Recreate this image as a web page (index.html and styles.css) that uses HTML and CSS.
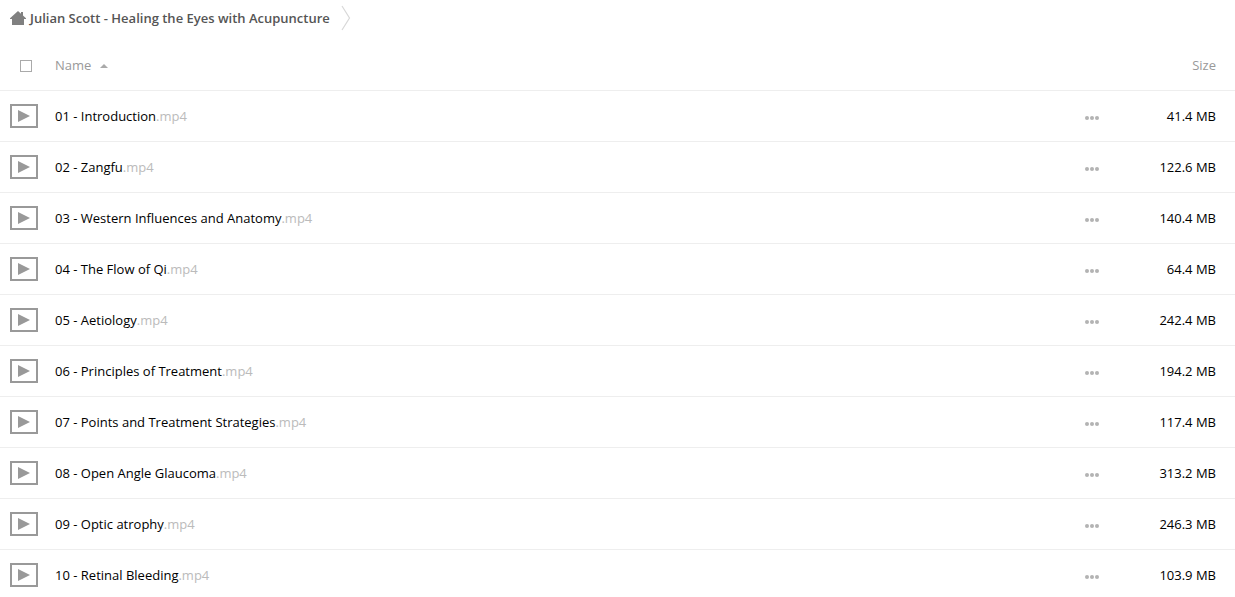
FILE: index.html
```
<!DOCTYPE html>
<html lang="en">
<head>
<meta charset="utf-8">
<title>Julian Scott - Healing the Eyes with Acupuncture</title>
<link rel="stylesheet" href="styles.css">
</head>
<body>
<svg class="sprite" aria-hidden="true">
  <symbol id="play" viewBox="0 0 28 24"><path d="M1 1h26v22H1z" fill="none" stroke="#999" stroke-width="2"/><path d="M8 6v12l12-6z" fill="#999"/></symbol>
  <symbol id="dots" viewBox="0 0 14 4"><circle cx="2" cy="2" r="2"/><circle cx="7" cy="2" r="2"/><circle cx="12" cy="2" r="2"/></symbol>
</svg>
<nav class="breadcrumb" aria-label="Breadcrumb">
  <a class="crumb" href="#"><svg class="home" viewBox="0 0 16 14"><path d="M8 0l3 2.700V1h2v3.500L16 7.200V8h-2v6H2V8H0v-.8z" fill="#808080"/></svg><span>Julian Scott - Healing the Eyes with Acupuncture</span></a>
  <svg class="chevron" viewBox="0 0 10 26"><path d="M1 1l7.500 12L1 25" fill="none" stroke="#d8d8d8" stroke-width="1.200"/></svg>
</nav>
<table class="files">
  <thead>
    <tr>
      <th class="pick"><input class="check" type="checkbox" aria-label="Select all"></th>
      <th class="name"><button class="sort" type="button">Name<svg class="arrow" viewBox="0 0 8 4"><path d="M4 0l4 4H0z" fill="#aaa"/></svg></button></th>
      <th class="actions"></th>
      <th class="size"><button class="sort" type="button">Size</button></th>
    </tr>
  </thead>
  <tbody>
    <tr><td class="pick"><svg class="thumb"><use href="#play"/></svg></td><td class="name"><a class="file" href="#">01 - Introduction<span class="ext">.mp4</span></a></td><td class="actions"><button class="more" type="button" aria-label="More"><svg class="dots"><use href="#dots"/></svg></button></td><td class="size">41.4 MB</td></tr>
    <tr><td class="pick"><svg class="thumb"><use href="#play"/></svg></td><td class="name"><a class="file" href="#">02 - Zangfu<span class="ext">.mp4</span></a></td><td class="actions"><button class="more" type="button" aria-label="More"><svg class="dots"><use href="#dots"/></svg></button></td><td class="size">122.6 MB</td></tr>
    <tr><td class="pick"><svg class="thumb"><use href="#play"/></svg></td><td class="name"><a class="file" href="#">03 - Western Influences and Anatomy<span class="ext">.mp4</span></a></td><td class="actions"><button class="more" type="button" aria-label="More"><svg class="dots"><use href="#dots"/></svg></button></td><td class="size">140.4 MB</td></tr>
    <tr><td class="pick"><svg class="thumb"><use href="#play"/></svg></td><td class="name"><a class="file" href="#">04 - The Flow of Qi<span class="ext">.mp4</span></a></td><td class="actions"><button class="more" type="button" aria-label="More"><svg class="dots"><use href="#dots"/></svg></button></td><td class="size">64.4 MB</td></tr>
    <tr><td class="pick"><svg class="thumb"><use href="#play"/></svg></td><td class="name"><a class="file" href="#">05 - Aetiology<span class="ext">.mp4</span></a></td><td class="actions"><button class="more" type="button" aria-label="More"><svg class="dots"><use href="#dots"/></svg></button></td><td class="size">242.4 MB</td></tr>
    <tr><td class="pick"><svg class="thumb"><use href="#play"/></svg></td><td class="name"><a class="file" href="#">06 - Principles of Treatment<span class="ext">.mp4</span></a></td><td class="actions"><button class="more" type="button" aria-label="More"><svg class="dots"><use href="#dots"/></svg></button></td><td class="size">194.2 MB</td></tr>
    <tr><td class="pick"><svg class="thumb"><use href="#play"/></svg></td><td class="name"><a class="file" href="#">07 - Points and Treatment Strategies<span class="ext">.mp4</span></a></td><td class="actions"><button class="more" type="button" aria-label="More"><svg class="dots"><use href="#dots"/></svg></button></td><td class="size">117.4 MB</td></tr>
    <tr><td class="pick"><svg class="thumb"><use href="#play"/></svg></td><td class="name"><a class="file" href="#">08 - Open Angle Glaucoma<span class="ext">.mp4</span></a></td><td class="actions"><button class="more" type="button" aria-label="More"><svg class="dots"><use href="#dots"/></svg></button></td><td class="size">313.2 MB</td></tr>
    <tr><td class="pick"><svg class="thumb"><use href="#play"/></svg></td><td class="name"><a class="file" href="#">09 - Optic atrophy<span class="ext">.mp4</span></a></td><td class="actions"><button class="more" type="button" aria-label="More"><svg class="dots"><use href="#dots"/></svg></button></td><td class="size">246.3 MB</td></tr>
    <tr><td class="pick"><svg class="thumb"><use href="#play"/></svg></td><td class="name"><a class="file" href="#">10 - Retinal Bleeding<span class="ext">.mp4</span></a></td><td class="actions"><button class="more" type="button" aria-label="More"><svg class="dots"><use href="#dots"/></svg></button></td><td class="size">103.9 MB</td></tr>
  </tbody>
</table>
</body>
</html>
```
FILE: styles.css
```
* { box-sizing: border-box; }
body {
  margin: 0;
  background: #fff;
  color: #000;
  font: 13px/18px "Open Sans", "Noto Sans", sans-serif;
}
svg { display: block; }
.sprite { display: none; }
.breadcrumb {
  display: flex;
  align-items: center;
  gap: 11px;
  padding: 5px 10px 9px;
}
.crumb {
  display: flex;
  align-items: center;
  gap: 4px;
  color: #555;
  font-weight: 600;
  text-decoration: none;
}
.home { width: 16px; height: 14px; }
.chevron { width: 10px; height: 26px; }
.files {
  width: 100%;
  border-collapse: separate;
  border-spacing: 0;
}
.files th,
.files td {
  height: 51px;
  padding: 0;
  border-bottom: 1px solid #eee;
  text-align: left;
  vertical-align: middle;
}
.files .pick { width: 55px; padding-left: 10px; }
.files th.pick { padding: 2px 0 0 20px; }
.files .actions { width: 60px; }
.files .size {
  width: 90px;
  padding-right: 19px;
  text-align: right;
  white-space: nowrap;
}
.check {
  display: block;
  appearance: none;
  width: 12px;
  height: 12px;
  margin: 0;
  border: 1px solid #aaa;
  background: #fff;
}
.check:checked { background: #999; }
.sort {
  display: inline-flex;
  align-items: center;
  gap: 9px;
  padding: 0;
  border: 0;
  background: none;
  color: #999;
  font: inherit;
  font-weight: 400;
  cursor: pointer;
}
.arrow { width: 8px; height: 4px; margin-top: 2px; }
.thumb { width: 28px; height: 24px; }
.file { color: inherit; text-decoration: none; }
.ext { color: #bbb; }
.more {
  display: block;
  padding: 4px 0 0;
  border: 0;
  background: none;
  cursor: pointer;
}
.dots { width: 14px; height: 4px; fill: #b3b3b3; }
```
